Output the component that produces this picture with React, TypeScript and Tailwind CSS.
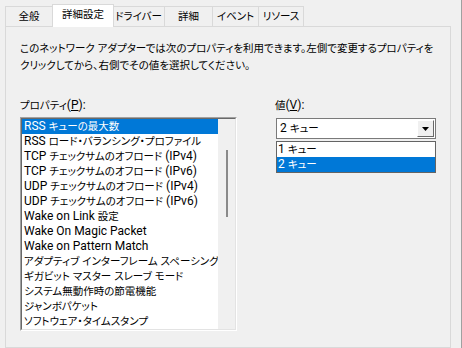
import React from "react"

const tabs = [
  { label: "全般", w: "w-[48px]" },
  { label: "詳細設定", w: "w-[62px]", active: true },
  { label: "ドライバー", w: "w-[53px]" },
  { label: "詳細", w: "w-[49px]" },
  { label: "イベント", w: "w-[47px]" },
  { label: "リソース", w: "w-[46px]" },
]

const props = [
  "RSS キューの最大数",
  "RSS ロード・バランシング・プロファイル",
  "TCP チェックサムのオフロード (IPv4)",
  "TCP チェックサムのオフロード (IPv6)",
  "UDP チェックサムのオフロード (IPv4)",
  "UDP チェックサムのオフロード (IPv6)",
  "Wake on Link 設定",
  "Wake On Magic Packet",
  "Wake on Pattern Match",
  "アダプティブ インターフレーム スペーシング",
  "ギガビット マスター スレーブ モード",
  "システム無動作時の節電機能",
  "ジャンボパケット",
  "ソフトウェア・タイムスタンプ",
]

// kana/kanji runs get a slightly smaller size so they match the narrow UI font
function J({ t }: { t: string }) {
  const parts = t.split(/([\u3000-\u30ff\u4e00-\u9fff\uff00-\uffef]+)/)
  return (
    <>
      {parts.map((p, i) =>
        i % 2 === 1 ? (
          <span key={i} className="text-[10.5px]">
            {p}
          </span>
        ) : (
          p
        )
      )}
    </>
  )
}

export default function App() {
  return (
    <div className="flex h-[348px] w-[462px] overflow-hidden bg-[#f0f0f0] text-[12px] text-black [font-family:Roboto,'Noto_Sans_CJK_JP',sans-serif] [font-feature-settings:'palt']">
      <div className="flex w-[460px] flex-col">
        {/* tab strip */}
        <div className="relative z-10 flex h-[26px] items-end pl-[5px]">
          {tabs.map((t) =>
            t.active ? (
              <div
                key={t.label}
                className={`${t.w} -ml-px -mr-px flex h-[23px] translate-y-px items-center justify-center whitespace-nowrap border border-b-0 border-[#d9d9d9] bg-white pb-[2px]`}
              >
                <J t={t.label} />
              </div>
            ) : (
              <div
                key={t.label}
                className={`${t.w} -ml-px flex h-[20px] items-center justify-center whitespace-nowrap border border-b-0 border-[#d9d9d9] bg-[#f0f0f0] first:ml-0`}
              >
                <J t={t.label} />
              </div>
            )
          )}
        </div>

        {/* page */}
        <div className="ml-[5px] w-[446px] flex-1 border border-[#d9d9d9] bg-[#f0f0f0] pl-[14px] pt-[13px]">
          <p className="whitespace-nowrap leading-[16px]">
            <J t="このネットワーク アダプターでは次のプロパティを利用できます。左側で変更するプロパティを" />
            <br />
            <J t="クリックしてから、右側でその値を選択してください。" />
          </p>

          <div className="mt-[23px] flex">
            <div className="w-[217px]">
              <div className="h-[16px] leading-[16px]">
                <J t="プロパティ" />(<span className="underline">P</span>):
              </div>
              <div className="mt-[4px] h-[214px] border border-t-[#a0a0a0] border-l-[#a0a0a0] border-r-white border-b-white">
                <div className="flex h-full border border-t-[#696969] border-l-[#696969] border-r-[#e3e3e3] border-b-[#e3e3e3] bg-white">
                  <div className="w-[196px] overflow-hidden whitespace-nowrap">
                    {props.map((p, i) => (
                      <div
                        key={p}
                        className={`h-[15px] overflow-hidden pl-[2px] leading-[15px] ${i === 0 ? "bg-[#0078d7] text-white" : ""}`}
                      >
                        <J t={p} />
                      </div>
                    ))}
                  </div>
                  <div className="w-[17px] bg-[#f0f0f0] pt-[31px]">
                    <div className="ml-[8px] h-[67px] w-[2px] bg-[#8a8a8a]" />
                  </div>
                </div>
              </div>
            </div>

            <div className="ml-[38px] w-[161px]">
              <div className="h-[16px] leading-[16px]">
                <J t="値" />(<span className="underline">V</span>):
              </div>
              <div className="relative ml-px mt-[5px]">
                <div className="flex h-[21px] w-[160px] items-center border border-[#7a7a7a] bg-white">
                  <span className="h-[15px] flex-1 pl-[3px] leading-[15px]">
                    <J t="2 キュー" />
                  </span>
                  <div className="mr-px flex h-[17px] w-[17px] items-center justify-center border border-t-white border-l-white border-r-[#696969] border-b-[#696969] bg-[#f0f0f0]">
                    <svg width="7" height="4" viewBox="0 0 7 4">
                      <path d="M0 0h7L3.5 4z" fill="#000" />
                    </svg>
                  </div>
                </div>
                <div className="absolute left-0 top-[23px] w-[160px] border border-[#646464] bg-white">
                  <div className="h-[15px] overflow-hidden pl-[1px] leading-[15px]">
                    <J t="1 キュー" />
                  </div>
                  <div className="h-[15px] overflow-hidden bg-[#0078d7] pl-[1px] leading-[15px] text-white">
                    <J t="2 キュー" />
                  </div>
                </div>
              </div>
            </div>
          </div>
        </div>
      </div>
      <div className="ml-[1px] w-px bg-[#a0a0a0]" />
    </div>
  )
}
